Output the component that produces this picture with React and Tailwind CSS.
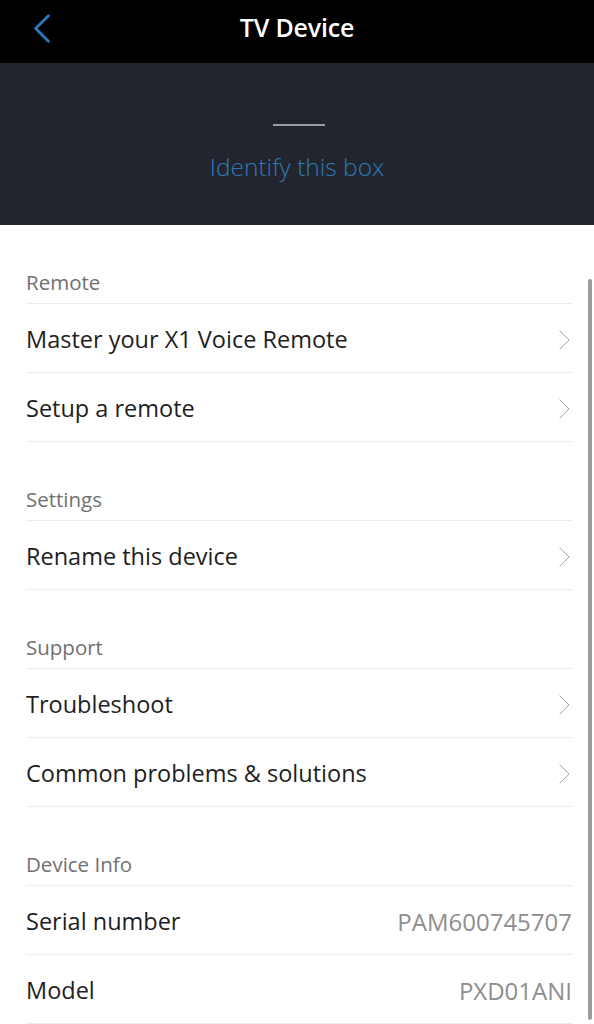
const sections = [
  {
    title: 'Remote',
    rows: [
      { label: 'Master your X1 Voice Remote', link: true },
      { label: 'Setup a remote', link: true },
    ],
  },
  {
    title: 'Settings',
    rows: [{ label: 'Rename this device', link: true }],
  },
  {
    title: 'Support',
    rows: [
      { label: 'Troubleshoot', link: true },
      { label: 'Common problems & solutions', link: true },
    ],
  },
  {
    title: 'Device Info',
    rows: [
      { label: 'Serial number', value: 'PAM600745707' },
      { label: 'Model', value: 'PXD01ANI' },
    ],
  },
];

function Chevron({ left, className }) {
  return (
    <svg viewBox="0 0 14 24" className={className} fill="none" stroke="currentColor" strokeLinecap="round" strokeLinejoin="round">
      <path d={left ? 'M12 2L2 12l10 10' : 'M2 2l10 10L2 22'} />
    </svg>
  );
}

function Row({ row }) {
  return (
    <div className="flex items-center justify-between h-[69px] pt-[3px] border-b border-[#ececec]">
      <span className="text-[23.5px] text-[#1e1e1e]">{row.label}</span>
      {row.link && <Chevron className="w-[13px] h-[22px] text-[#9b9b9b] mr-[1px]" />}
      {row.value && <span className="text-[24px] text-[#8e8e8e]">{row.value}</span>}
    </div>
  );
}

export default function App() {
  return (
    <div className="w-[594px] h-[1024px] overflow-hidden bg-white font-['Open_Sans',sans-serif] relative">
      <div className="h-[63px] bg-black flex items-center justify-center pb-[7px] relative">
        <Chevron left className="absolute left-[33px] top-[12px] w-[18px] h-[33px] text-[#2a78c2] stroke-[2.2]" />
        <h1 className="text-white text-[25px] font-semibold tracking-[-0.2px]">TV Device</h1>
      </div>
      <div className="h-[162px] bg-[#23252e] flex flex-col items-center">
        <div className="mt-[61px] w-[52px] h-[2px] bg-[#9a9ca3] ml-[4px]" />
        <span className="mt-[23px] text-[24.5px] font-light text-[#2c7ab9]">Identify this box</span>
      </div>
      <div className="px-[26px] pr-[22px]">
        {sections.map((s) => (
          <div key={s.title}>
            <div className="h-[79px] flex items-end pb-[5px] border-b border-[#ececec] text-[20.5px] text-[#707070]">
              {s.title}
            </div>
            {s.rows.map((r) => (
              <Row key={r.label} row={r} />
            ))}
          </div>
        ))}
      </div>
      {/* scroll indicator */}
      <div className="absolute right-[2px] top-[279px] bottom-[4px] w-[4px] rounded-full bg-[#9c9c9c]" />
    </div>
  );
}
